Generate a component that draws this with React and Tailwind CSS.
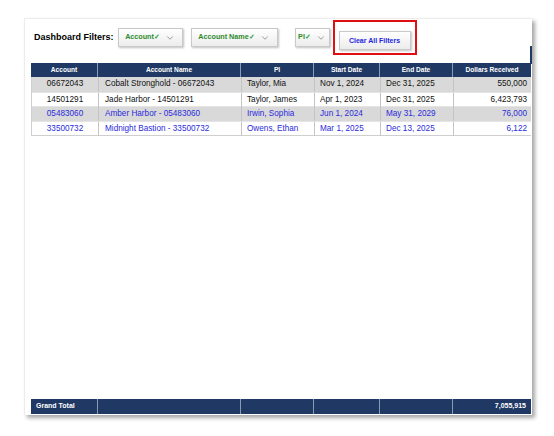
import React from 'react';
import { ChevronDown } from 'lucide-react';

const columns = [
  { label: 'Account', align: 'text-center' },
  { label: 'Account Name', align: 'text-left pl-[6px]' },
  { label: 'PI', align: 'text-left pl-[5px]' },
  { label: 'Start Date', align: 'text-left pl-[5px]' },
  { label: 'End Date', align: 'text-left pl-[5px]' },
  { label: 'Dollars Received', align: 'text-right pr-[5px]' },
];

const rows = [
  { cells: ['06672043', 'Cobalt Stronghold - 06672043', 'Taylor, Mia', 'Nov 1, 2024', 'Dec 31, 2025', '550,000'], shade: true, blue: false },
  { cells: ['14501291', 'Jade Harbor - 14501291', 'Taylor, James', 'Apr 1, 2023', 'Dec 31, 2025', '6,423,793'], shade: false, blue: false },
  { cells: ['05483060', 'Amber Harbor - 05483060', 'Irwin, Sophia', 'Jun 1, 2024', 'May 31, 2029', '76,000'], shade: true, blue: true },
  { cells: ['33500732', 'Midnight Bastion - 33500732', 'Owens, Ethan', 'Mar 1, 2025', 'Dec 13, 2025', '6,122'], shade: false, blue: true },
];

const gridCols = 'grid grid-cols-[67px_143px_73px_66px_73px_78px]';

const FilterButton = ({ label, className }) => (
  <button
    className={`flex items-center justify-center gap-[5px] h-[19px] border border-[#c9c9c9] bg-gradient-to-b from-white to-[#ececec] shadow-[1px_1px_2px_rgba(0,0,0,0.25)] text-[7.2px] font-bold text-[#2e8b2e] ${className}`}
  >
    <span>
      {label}
      <span className="text-[#2ea02e] font-bold">✓</span>
    </span>
    <ChevronDown size={10} strokeWidth={1.5} className="text-[#666]" />
  </button>
);

const App = () => {
  return (
    <div className="w-[554px] h-[436px] bg-white pt-[18px] pl-[24px] font-['Liberation_Sans',Arial,sans-serif]">
      <div className="relative w-[508px] h-[397px] bg-white border-l border-t border-[#ececec] shadow-[3px_3px_4px_rgba(0,0,0,0.35)] flex flex-col">
        {/* Filters */}
        <div className="flex items-center h-[34px] pt-[3px] pl-[9px]">
          <span className="text-[9px] font-bold text-black mr-[4px]">Dashboard Filters:</span>
          <FilterButton label="Account" className="w-[65px]" />
          <FilterButton label="Account Name" className="w-[87px] ml-[8px]" />
          <FilterButton label="PI" className="w-[35px] ml-[17px]" />
          <div className="ml-[3px] border-2 border-[#e01010] px-[4px] pt-[4px] pb-[3px]">
            <button className="w-[72px] h-[19px] border border-[#c9c9c9] bg-gradient-to-b from-white to-[#ececec] shadow-[1px_1px_2px_rgba(0,0,0,0.25)] text-[7px] font-bold text-[#2525e0]">
              Clear All Filters
            </button>
          </div>
        </div>

        {/* scroll column strip */}
        <div className="absolute right-[0px] top-[27px] w-[2px] h-[18px] bg-[#1f3864]" />

        {/* Table */}
        <div className="flex-1 flex flex-col mt-[10px] ml-[6px] mr-[1px]">
          <div className={`${gridCols} h-[14px] bg-[#1f3864] text-white text-[6.6px] font-bold`}>
            {columns.map((c, i) => (
              <div key={i} className={`flex items-center justify-center ${i < 5 ? 'border-r border-[#8a9ab5]' : ''}`}>
                {c.label}
              </div>
            ))}
          </div>
          <div className="border-l border-b border-[#cfcfcf]">
            {rows.map((row, r) => (
              <div
                key={r}
                className={`${gridCols} h-[14.5px] text-[8.2px] ${row.shade ? 'bg-[#d9d9d9]' : 'bg-white'} ${row.blue ? 'text-[#2b2bdc]' : 'text-[#111]'} ${r > 0 ? 'border-t border-[#e4e4e4]' : ''}`}
              >
                {row.cells.map((cell, i) => (
                  <div
                    key={i}
                    className={`leading-[14px] whitespace-nowrap ${columns[i].align} ${i < 5 ? 'border-r border-[#c4c4c4]' : ''}`}
                  >
                    {cell}
                  </div>
                ))}
              </div>
            ))}
          </div>
          <div className="flex-1" />
          <div className={`${gridCols} h-[15px] mb-[1px] bg-[#1f3864] text-white text-[7px] font-bold`}>
            <div className="flex items-center pl-[5px] border-r border-[#8a9ab5]">Grand Total</div>
            <div className="border-r border-[#8a9ab5]" />
            <div className="border-r border-[#8a9ab5]" />
            <div className="border-r border-[#8a9ab5]" />
            <div className="border-r border-[#8a9ab5]" />
            <div className="flex items-center justify-end pr-[5px]">7,055,915</div>
          </div>
        </div>
      </div>
    </div>
  );
};

export default App;
